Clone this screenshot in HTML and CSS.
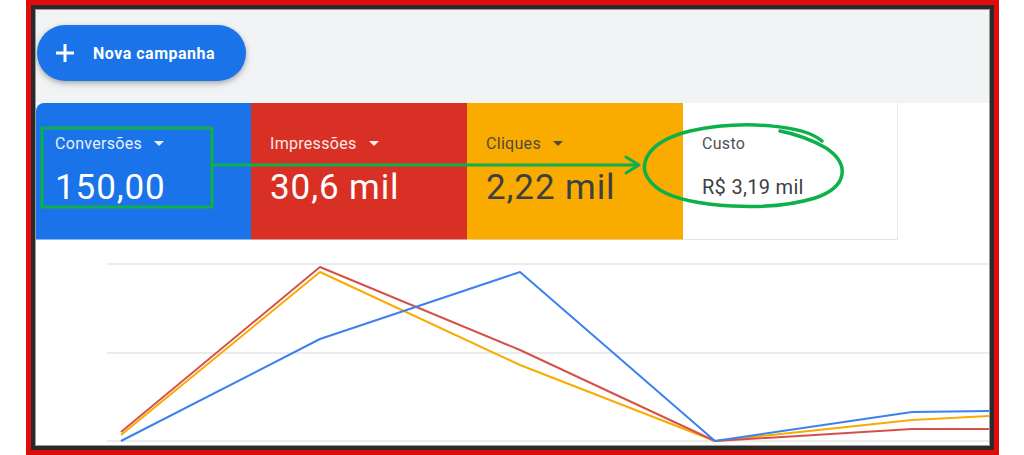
FILE: index.html
```html
<!DOCTYPE html>
<html lang="pt-BR">
<head>
    <meta charset="UTF-8">
    <meta name="viewport" content="width=device-width, initial-scale=1.0">
    <title>Google Ads - Visão geral</title>
    <link rel="stylesheet" href="styles.css">
</head>
<body>

    <!-- Moldura do print -->
    <div class="frame">
        <div class="screen">
            <div class="viewport">

                <!-- Barra com botao -->
                <div class="toolbar">
                    <button class="fab">
                        <svg class="fab-icon" width="20" height="20" viewBox="0 0 20 20">
                            <path d="M10 1v18M1 10h18" stroke="#fff" stroke-width="3" fill="none"/>
                        </svg>
                        <span>Nova campanha</span>
                    </button>
                </div>

                <!-- Cartoes de metricas -->
                <div class="scorecards">
                    <div class="card card-blue">
                        <div class="card-label">Conversões<span class="caret"></span></div>
                        <div class="card-value">150,00</div>
                    </div>
                    <div class="card card-red">
                        <div class="card-label">Impressões<span class="caret"></span></div>
                        <div class="card-value">30,6 mil</div>
                    </div>
                    <div class="card card-yellow">
                        <div class="card-label">Cliques<span class="caret"></span></div>
                        <div class="card-value">2,22 mil</div>
                    </div>
                    <div class="card card-white">
                        <div class="card-label">Custo</div>
                        <div class="card-value small">R$ 3,19 mil</div>
                    </div>
                </div>

                <!-- Grafico -->
                <div class="chart">
                    <svg width="953" height="205" viewBox="0 0 953 205">
                        <g stroke="#ebebeb" stroke-width="2">
                            <line x1="71" y1="24" x2="953" y2="24"/>
                            <line x1="71" y1="113" x2="953" y2="113"/>
                            <line x1="71" y1="201" x2="953" y2="201"/>
                        </g>
                        <g fill="none" stroke-width="2" stroke-linejoin="round">
                            <polyline stroke="#f9ab00" points="85,195 284,32 484,125 679,201 876,180 953,176"/>
                            <polyline stroke="#d5524a" points="85,192 284,27 484,110 679,201 876,189 953,189"/>
                            <polyline stroke="#3b82f0" points="85,201 284,99 484,32 679,201 876,172 953,171"/>
                        </g>
                    </svg>
                </div>

            </div>
        </div>
    </div>

    <!-- Marcacoes verdes por cima do print -->
    <svg class="annot" width="1024" height="455" viewBox="0 0 1024 455">
        <g fill="none" stroke="#0db14b" stroke-width="3" stroke-linecap="round" stroke-linejoin="round">
            <rect x="42" y="128" width="170" height="79"/>
            <line x1="213" y1="165" x2="638" y2="165"/>
            <polyline points="626,157 639,165 626,173"/>
            <path d="M822 141 C805 126 745 119 690 131 C645 142 630 170 660 190 C690 208 770 212 815 198 C848 187 850 164 826 148 C812 140 796 134 780 131" stroke-width="3.5"/>
        </g>
    </svg>

</body>
</html>
```

FILE: styles.css
```css
body {
    margin: 0;
    height: 455px;
    background: #fff;
    position: relative;
    overflow: hidden;
    font-family: Roboto, "Liberation Sans", Arial, sans-serif;
}
/* Moldura vermelha + preta */
.frame {
    margin-left: 26px;
    width: 973px;
    height: 455px;
    box-sizing: border-box;
    border: 5px solid #e00c0c;
}
.screen {
    height: 100%;
    box-sizing: border-box;
    border: 4px solid #2a2a2a;
}
.viewport {
    height: 100%;
    box-sizing: border-box;
    border: 1px solid #9a9a9a;
    background: #fff;
    overflow: hidden;
}
/* Barra de cima */
.toolbar {
    height: 93px;
    background: #f1f3f4;
    padding: 15px 0 0 1px;
    box-sizing: border-box;
}
.fab {
    display: flex;
    align-items: center;
    gap: 18px;
    width: 209px;
    height: 56px;
    padding: 0 0 0 18px;
    border: none;
    border-radius: 28px;
    background: #1a73e8;
    color: #fff;
    font-family: Roboto, "Liberation Sans", Arial, sans-serif;
    font-size: 16px;
    font-weight: 700;
    letter-spacing: 0.5px;
    box-shadow: 0 2px 4px rgba(60, 64, 67, 0.3), 0 3px 8px rgba(60, 64, 67, 0.15);
    cursor: pointer;
}
.fab-icon {
    flex: none;
}
/* Cartoes */
.scorecards {
    display: grid;
    grid-template-columns: 215px 216px 216px 215px;
    height: 137px;
    background: #fff;
}
.card {
    padding: 31px 0 0 19px;
    box-sizing: border-box;
    border-bottom: 1px solid rgba(232, 234, 237, 0.55);
}
.card-blue {
    background: #1a73e8;
    color: #fff;
    border-top-left-radius: 8px;
}
.card-red {
    background: #d93025;
    color: #fff;
}
.card-yellow {
    background: #f9ab00;
    color: #3c4043;
}
.card-white {
    background: #fff;
    color: #3c4043;
    border-right: 1px solid #e8eaed;
    border-bottom: 1px solid #e3e5e8;
}
.card-label {
    display: flex;
    align-items: center;
    font-size: 16px;
    line-height: 19px;
    letter-spacing: 0.3px;
    opacity: 0.9;
}
.caret {
    margin-left: 12px;
    width: 0;
    height: 0;
    border-left: 5px solid transparent;
    border-right: 5px solid transparent;
    border-top: 5px solid currentColor;
}
.card-value {
    margin-top: 15px;
    font-size: 35px;
    line-height: 40px;
    letter-spacing: 0.9px;
}
.card-value.small {
    margin-top: 14px;
    font-size: 20px;
    line-height: 40px;
    letter-spacing: 0.3px;
}
/* Grafico */
.chart svg {
    display: block;
}
/* Marcacoes */
.annot {
    position: absolute;
    top: 0;
    left: 0;
    pointer-events: none;
}
```
